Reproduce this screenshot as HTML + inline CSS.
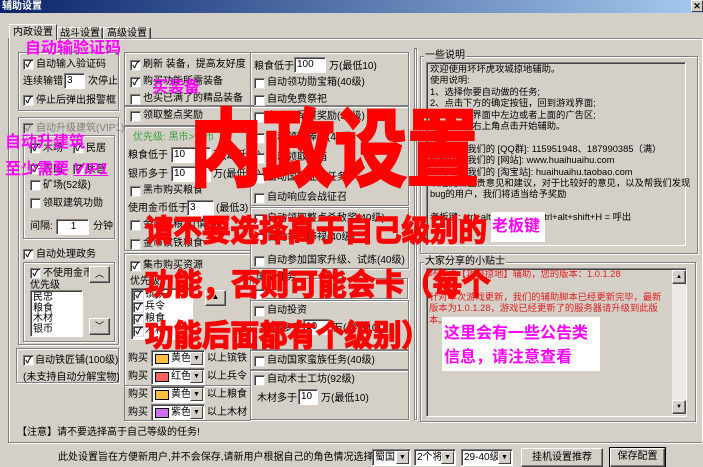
<!DOCTYPE html>
<html><head><meta charset="utf-8"><style>
*{margin:0;padding:0;box-sizing:border-box}
body{width:703px;height:467px;background:#d4d0c8;position:relative;overflow:hidden;font-family:"Liberation Sans","Noto Sans CJK SC",sans-serif;font-size:10px;line-height:12px;color:#000}
div,span{position:absolute;white-space:nowrap}
.title{left:0;top:0;width:703px;height:13px;background:linear-gradient(90deg,#0a246a,#a6caf0);color:#fff;font-weight:bold;font-size:10px;line-height:13px;padding-left:2px}
.x{right:0;top:0;width:12px;height:12px;background:#d4d0c8;border:1px solid #fff;border-right-color:#404040;border-bottom-color:#404040;font-size:9px;line-height:10px;text-align:center;font-weight:bold}
.g{border:1px solid #808080;box-shadow:inset 1px 1px #fff,1px 1px #fff}
.cb{width:11px;height:11px;background:#fff;border:1px solid #808080;border-right-color:#e0e0e0;border-bottom-color:#e0e0e0;box-shadow:inset 1px 1px #404040;font-size:9px;line-height:9px;text-align:center;font-weight:bold}
.in{background:#fff;border:1px solid #808080;border-right-color:#fff;border-bottom-color:#fff;box-shadow:inset 1px 1px #404040;padding-left:2px;line-height:14px;height:16px}
.btn{background:#d4d0c8;border:1px solid #fff;border-right-color:#404040;border-bottom-color:#404040;box-shadow:inset -1px -1px #808080;text-align:center}
.m{color:#ff00ff;font-weight:bold;font-size:16px;line-height:16px}
.R{color:#ff0000;font-weight:bold;transform-origin:0 0;-webkit-text-stroke:1.5px #ff0000}
.gray{color:#808080}
.cmb{background:#fff;border:1px solid #808080;border-right-color:#fff;border-bottom-color:#fff;box-shadow:inset 1px 1px #404040;height:17px}
.arr{right:1px;top:1px;width:13px;height:13px;background:#d4d0c8;border:1px solid #fff;border-right-color:#404040;border-bottom-color:#404040;font-size:7px;line-height:11px;text-align:center}
.sw{left:3px;top:3px;width:14px;height:10px;border:1px solid #000}
.tx{background:#d4d0c8;border:1px solid #808080;border-right-color:#fff;border-bottom-color:#fff;box-shadow:inset 1px 1px #404040}
.note{font-size:9.3px;line-height:11.4px}
</style></head><body>
<div class="title">辅助设置</div><div class="x">✕</div>

<div class="g" style="left:8px;top:38px;width:694px;height:405px;border-right:none"></div>
<div class="btn" style="left:9px;top:24px;width:48px;height:16px;border-bottom:none;box-shadow:none;line-height:15px;z-index:2">内政设置</div>
<div class="btn" style="left:57px;top:27px;width:46px;height:12px;border-bottom:none;line-height:12px">战斗设置</div>
<div class="btn" style="left:103px;top:27px;width:48px;height:12px;border-bottom:none;line-height:12px">高级设置</div>

<!-- col1 -->
<div class="g" style="left:18px;top:52px;width:101px;height:59px"></div>
<div class="cb" style="left:23px;top:59px">✓</div><span style="left:36px;top:59px">自动输入验证码</span>
<span style="left:23px;top:76px">连续输错</span><div class="in" style="left:64px;top:73px;width:21px">3</div><span style="left:88px;top:76px">次停止</span>
<div class="cb" style="left:23px;top:95px">✓</div><span style="left:36px;top:95px">停止后弹出报警框</span>
<div class="m" style="left:25px;top:41px">自动输验证码</div>

<div class="g" style="left:18px;top:117px;width:101px;height:228px"></div>
<div class="cb" style="left:23px;top:123px;background:#d4d0c8;color:#808080">✓</div><span class="gray" style="left:36px;top:123px">自动升级建筑(VIP1)</span>
<div class="g" style="left:23px;top:135px;width:92px;height:104px"></div>
<div class="cb" style="left:30px;top:143px">✓</div><span style="left:43px;top:143px">木场</span><div class="cb" style="left:73px;top:143px">✓</div><span style="left:86px;top:143px">民居</span>
<div class="cb" style="left:30px;top:164px">✓</div><span style="left:43px;top:164px">农田</span><div class="cb" style="left:73px;top:164px">✓</div><span style="left:86px;top:164px">兵营</span>
<div class="cb" style="left:30px;top:180px"></div><span style="left:43px;top:180px">矿场(52级)</span>
<div class="cb" style="left:30px;top:198px"></div><span style="left:43px;top:198px">领取建筑功勋</span>
<span style="left:30px;top:221px">间隔:</span><div class="in" style="left:56px;top:219px;width:33px;text-align:center">1</div><span style="left:93px;top:221px">分钟</span>
<div class="m" style="left:5px;top:135px">自动升建筑</div>
<div class="m" style="left:5px;top:162px">至少需要 <i style="text-decoration:underline">VIP1</i></div>

<div class="cb" style="left:23px;top:249px">✓</div><span style="left:36px;top:249px">自动处理政务</span>
<div class="g" style="left:23px;top:262px;width:92px;height:80px"></div>
<div class="cb" style="left:30px;top:268px">✓</div><span style="left:43px;top:268px">不使用金币</span>
<div class="btn" style="left:89px;top:266px;width:21px;height:17px;font-size:9px;line-height:14px">︿</div>
<span style="left:30px;top:280px">优先级</span>
<div class="in" style="left:30px;top:290px;width:53px;height:47px;line-height:10.5px;padding-top:2px">民忠<br>粮食<br>木材<br>银币</div>
<div class="btn" style="left:89px;top:318px;width:21px;height:17px;font-size:9px;line-height:14px">﹀</div>
<div class="g" style="left:16px;top:348px;width:103px;height:35px"></div>
<div class="cb" style="left:23px;top:355px">✓</div><span style="left:35px;top:355px">自动铁匠铺(100级)</span>
<span style="left:23px;top:372px">(未支持自动分解宝物)</span>

<!-- col2 -->
<div class="g" style="left:124px;top:52px;width:127px;height:54px"></div>
<div class="cb" style="left:130px;top:60px">✓</div><span style="left:143px;top:59px">刷新 装备，提高友好度</span>
<div class="cb" style="left:130px;top:77px">✓</div><span style="left:143px;top:76px">购买功能所需装备</span>
<div class="cb" style="left:130px;top:94px"></div><span style="left:143px;top:93px">也买已满了的精品装备</span>
<div class="m" style="left:152px;top:80px">买装备</div>
<div class="g" style="left:124px;top:106px;width:127px;height:20px"></div>
<div class="cb" style="left:130px;top:111px"></div><span style="left:143px;top:110px">领取整点奖励</span>
<div class="g" style="left:124px;top:126px;width:127px;height:125px"></div>
<span style="left:133px;top:132px;color:#40a040">优先级: 黑市&gt;金币</span>
<span style="left:128px;top:150px">粮食低于</span><div class="in" style="left:171px;top:147px;width:40px">10</div><span style="left:213px;top:150px">万(最低10)</span>
<span style="left:128px;top:169px">银币多于</span><div class="in" style="left:171px;top:166px;width:40px">10</div><span style="left:213px;top:169px">万(最低10)</span>
<div class="cb" style="left:130px;top:186px"></div><span style="left:143px;top:185px">黑市购买粮食</span>
<span style="left:128px;top:203px">使用金币低于</span><div class="in" style="left:187px;top:200px;width:27px">3</div><span style="left:216px;top:203px">(最低3)</span>
<div class="cb" style="left:130px;top:220px"></div><span style="left:143px;top:219px">金币紫粮食(慎选)</span>
<div class="cb" style="left:130px;top:239px"></div><span style="left:143px;top:238px">金币镔铁粮食</span>
<div class="g" style="left:124px;top:253px;width:127px;height:133px"></div>
<div class="cb" style="left:130px;top:261px">✓</div><span style="left:143px;top:260px">集市购买资源</span>
<span style="left:130px;top:276px;background:#d4d0c8">优先级</span>
<div class="in" style="left:131px;top:288px;width:62px;height:52px"></div>
<div class="cb" style="left:133px;top:290px">✓</div><span style="left:145px;top:289px">镔铁</span>
<div class="cb" style="left:133px;top:302px">✓</div><span style="left:145px;top:301px">兵令</span>
<div class="cb" style="left:133px;top:314px">✓</div><span style="left:145px;top:313px">粮食</span>
<div class="cb" style="left:133px;top:326px">✓</div><span style="left:145px;top:325px">木材</span>
<div class="btn" style="left:205px;top:290px;width:21px;height:16px;font-size:8px">▲</div>
<span style="left:128px;top:353px">购买</span><div class="cmb" style="left:151px;top:350px;width:54px"><div class="sw" style="background:#ffbf40"></div><span style="left:19px;top:2px">黄色</span><div class="arr">▼</div></div><span style="left:207px;top:353px">以上镔铁</span>
<span style="left:128px;top:371px">购买</span><div class="cmb" style="left:151px;top:368px;width:54px"><div class="sw" style="background:#ff6060"></div><span style="left:19px;top:2px">红色</span><div class="arr">▼</div></div><span style="left:207px;top:371px">以上兵令</span>
<span style="left:128px;top:389px">购买</span><div class="cmb" style="left:151px;top:386px;width:54px"><div class="sw" style="background:#ffbf40"></div><span style="left:19px;top:2px">黄色</span><div class="arr">▼</div></div><span style="left:207px;top:389px">以上粮食</span>
<span style="left:128px;top:407px">购买</span><div class="cmb" style="left:151px;top:404px;width:54px"><div class="sw" style="background:#d070f0"></div><span style="left:19px;top:2px">紫色</span><div class="arr">▼</div></div><span style="left:207px;top:407px">以上木材</span>
<div class="g" style="left:124px;top:386px;width:127px;height:35px;border-top:none;box-shadow:1px 1px #fff"></div>

<!-- col3 -->
<div class="g" style="left:250px;top:52px;width:159px;height:54px"></div>
<span style="left:254px;top:61px">粮食低于</span><div class="in" style="left:294px;top:57px;width:32px">100</div><span style="left:329px;top:61px">万(最低10)</span>
<div class="cb" style="left:254px;top:78px"></div><span style="left:267px;top:77px">自动领功勋宝箱(40级)</span>
<div class="cb" style="left:254px;top:95px"></div><span style="left:267px;top:94px">自动免费祭祀</span>
<div class="g" style="left:250px;top:106px;width:159px;height:100px"></div>
<div class="cb" style="left:254px;top:112px"></div><span style="left:267px;top:111px">自动领军资奖励(32级)</span>
<div class="cb" style="left:254px;top:133px"></div><span style="left:267px;top:132px">自动领取俸禄(40级)</span>
<div class="cb" style="left:254px;top:153px"></div><span style="left:267px;top:152px">自动领取宝箱</span>
<div class="cb" style="left:254px;top:173px"></div><span style="left:267px;top:172px">自动国家征召任务</span>
<div class="cb" style="left:254px;top:193px"></div><span style="left:267px;top:192px">自动响应会战征召</span>
<div class="g" style="left:250px;top:207px;width:159px;height:62px"></div>
<div class="cb" style="left:254px;top:214px"></div><span style="left:267px;top:213px">自动领取整点杀敌奖(40级)</span>
<div class="cb" style="left:254px;top:233px"></div><span style="left:267px;top:232px">自动领取俸禄(40级)</span>
<div class="cb" style="left:254px;top:256px"></div><span style="left:267px;top:255px">自动参加国家升级、试炼(40级)</span>
<div class="g" style="left:253px;top:278px;width:155px;height:21px"></div><span style="left:256px;top:272px;background:#d4d0c8">国家任务</span>
<div class="cb" style="left:254px;top:289px"></div>
<div class="g" style="left:250px;top:300px;width:159px;height:50px"></div>
<div class="cb" style="left:254px;top:306px"></div><span style="left:267px;top:305px">自动投资</span>
<span style="left:262px;top:323px">银币多于</span><div class="in" style="left:303px;top:319px;width:27px">10</div><span style="left:333px;top:323px">万(最低10)</span>
<div class="g" style="left:250px;top:350px;width:159px;height:20px"></div>
<div class="cb" style="left:254px;top:356px"></div><span style="left:267px;top:355px">自动国家蛮族任务(40级)</span>
<div class="g" style="left:250px;top:370px;width:159px;height:50px"></div>
<div class="cb" style="left:254px;top:375px"></div><span style="left:267px;top:374px">自动术士工坊(92级)</span>
<span style="left:257px;top:393px">木材多于</span><div class="in" style="left:298px;top:389px;width:20px">10</div><span style="left:321px;top:393px">万(最低10)</span>
<div class="g" style="left:414px;top:48px;width:3px;height:372px"></div>

<!-- right -->
<div class="g" style="left:420px;top:56px;width:278px;height:198px"></div>
<span style="left:424px;top:50px;background:#d4d0c8;padding:0 1px">一些说明</span>
<div class="tx" style="left:426px;top:62px;width:260px;height:184px"></div>
<div class="note" style="left:430px;top:64px">欢迎使用坏坏虎攻城掠地辅助。<br>使用说明:<br>1、选择你要自动做的任务;<br>2、点击下方的确定按钮，回到游戏界面;<br>3、请隐藏界面中左边或者上面的广告区;<br>4、在界面右上角点击开始辅助。<br><br>欢迎加入我们的 [QQ群]: 115951948、187990385（满）<br>欢迎访问我们的 [网站]: www.huaihuaihu.com<br>欢迎访问我们的 [淘宝站]: huaihuaihu.taobao.com<br>欢迎提出宝贵意见和建议，对于比较好的意见，以及帮我们发现<br>bug的用户，我们将适当给予奖励<br><br>老板键: ctrl+alt+H = 隐藏;&nbsp; ctrl+alt+shift+H = 呼出</div>
<div class="m" style="left:491px;top:212px;width:54px;height:30px;background:#fff;padding:7px 0 0 1px">老板键</div>

<div class="g" style="left:420px;top:262px;width:276px;height:160px"></div>
<span style="left:424px;top:256px;background:#d4d0c8;padding:0 1px">大家分享的小贴士</span>
<div class="tx" style="left:426px;top:268px;width:261px;height:149px"></div>
<div style="left:672px;top:270px;width:14px;height:145px;background:#ece9e4"></div>
<div class="btn" style="left:672px;top:270px;width:14px;height:14px;font-size:6px;line-height:12px">▲</div>
<div class="btn" style="left:672px;top:400px;width:14px;height:14px;font-size:6px;line-height:12px">▼</div>
<div class="note" style="left:429px;top:269px;color:#e02020">坏坏虎【攻城掠地】辅助，您的版本：1.0.1.28<br><br>针对本次游戏更新，我们的辅助脚本已经更新完毕，最新<br>版本为1.0.1.28，游戏已经更新了的服务器请升级到此版<br>本。</div>
<div class="m" style="left:442px;top:317px;width:158px;height:54px;background:#fff;padding:5px 0 0 2px;line-height:24px">这里会有一些公告类<br>信息，请注意查看</div>

<!-- bottom -->
<span style="left:17px;top:427px">【注意】请不要选择高于自己等级的任务!</span>
<span style="left:58px;top:452px">此处设置旨在方便新用户,并不会保存,请新用户根据自己的角色情况选择:</span>
<div class="cmb" style="left:372px;top:449px;width:39px"><span style="left:2px;top:2px">蜀国</span><div class="arr">▼</div></div>
<div class="cmb" style="left:414px;top:449px;width:42px"><span style="left:2px;top:2px">2个将</span><div class="arr">▼</div></div>
<div class="cmb" style="left:461px;top:449px;width:52px"><span style="left:2px;top:2px">29-40级</span><div class="arr">▼</div></div>
<div class="btn" style="left:521px;top:448px;width:82px;height:19px;line-height:17px">挂机设置推荐</div>
<div class="btn" style="left:610px;top:448px;width:55px;height:19px;line-height:16px;outline:1px solid #000">保存配置</div>

<!-- overlay -->
<div class="R" style="left:190px;top:108px;font-size:84px;line-height:84px;transform:scaleX(0.86);-webkit-text-stroke:3px #ff0000">内政设置</div>
<div class="R" style="left:145px;top:217px;font-size:30px;line-height:30px;transform:scaleX(0.95)">请不要选择高于自己级别的</div>
<div class="R" style="left:145px;top:271px;font-size:30px;line-height:30px;transform:scaleX(0.96)">功能，否则可能会卡（每个</div>
<div class="R" style="left:145px;top:322px;font-size:30px;line-height:30px;transform:scaleX(0.95)">功能后面都有个级别）</div>
</body></html>
